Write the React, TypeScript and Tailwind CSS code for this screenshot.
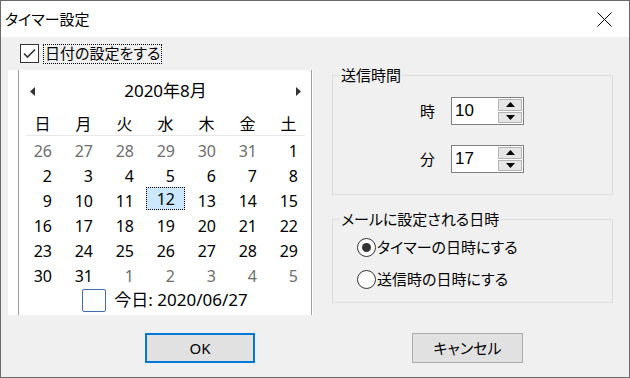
import React from 'react';

type Day = { d: number; muted?: boolean };

const weeks: Day[][] = [
  [{ d: 26, muted: true }, { d: 27, muted: true }, { d: 28, muted: true }, { d: 29, muted: true }, { d: 30, muted: true }, { d: 31, muted: true }, { d: 1 }],
  [{ d: 2 }, { d: 3 }, { d: 4 }, { d: 5 }, { d: 6 }, { d: 7 }, { d: 8 }],
  [{ d: 9 }, { d: 10 }, { d: 11 }, { d: 12 }, { d: 13 }, { d: 14 }, { d: 15 }],
  [{ d: 16 }, { d: 17 }, { d: 18 }, { d: 19 }, { d: 20 }, { d: 21 }, { d: 22 }],
  [{ d: 23 }, { d: 24 }, { d: 25 }, { d: 26 }, { d: 27 }, { d: 28 }, { d: 29 }],
  [{ d: 30 }, { d: 31 }, { d: 1, muted: true }, { d: 2, muted: true }, { d: 3, muted: true }, { d: 4, muted: true }, { d: 5, muted: true }],
];

const dayNames = ['日', '月', '火', '水', '木', '金', '土'];

function SpinBox({ label, value }: { label: string; value: string }) {
  return (
    <div className="flex items-center pl-[87px]">
      <span className="w-[31px] text-[15px] text-black">{label}</span>
      <div className="flex h-[28px] border border-[#7f7f7f]">
        <div className="w-[45px] bg-white pl-[3px] font-['Liberation_Sans',sans-serif] text-[17px] leading-[26px] text-black">
          {value}
        </div>
        <div className="flex w-[26px] flex-col gap-[1px] bg-white p-[1px]">
          <div className="flex flex-1 items-center justify-center border border-[#b4b4b4] bg-[#e6e6e6]">
            <svg width="9" height="5" viewBox="0 0 9 5">
              <path d="M0 5 L4.5 0 L9 5 Z" fill="#000" />
            </svg>
          </div>
          <div className="flex flex-1 items-center justify-center border border-[#b4b4b4] bg-[#e6e6e6]">
            <svg width="9" height="5" viewBox="0 0 9 5">
              <path d="M0 0 L4.5 5 L9 0 Z" fill="#000" />
            </svg>
          </div>
        </div>
      </div>
    </div>
  );
}

function Radio({ checked, label }: { checked?: boolean; label: string }) {
  return (
    <div className="flex h-[32px] items-center pl-[24px]">
      <span className="flex h-[19px] w-[19px] items-center justify-center rounded-full border border-[#333333] bg-white">
        {checked && <span className="h-[9px] w-[9px] rounded-full bg-[#333333]" />}
      </span>
      <span className="ml-[1px] text-[15px] text-black">{label}</span>
    </div>
  );
}

export default function App() {
  return (
    <div className="flex h-[378px] w-[630px] flex-col border border-[#6b6b6b] bg-[#f0f0f0] font-['Noto_Sans','Noto_Sans_CJK_JP',sans-serif] [font-feature-settings:'palt']">
      {/* Title bar */}
      <div className="flex h-[36px] shrink-0 items-center justify-between bg-white pl-[4px] pr-[17px]">
        <span className="text-[15px] text-black">タイマー設定</span>
        <svg width="15" height="15" viewBox="0 0 15 15">
          <path d="M0.5 0.5 L14.5 14.5 M14.5 0.5 L0.5 14.5" stroke="#000" strokeWidth="1" />
        </svg>
      </div>

      <div className="flex">
        {/* Left: checkbox + calendar */}
        <div className="ml-[7px] w-[305px]">
          <div className="flex h-[33px] items-center pl-[12px]">
            <span className="flex h-[19px] w-[19px] items-center justify-center border border-[#333333] bg-white">
              <svg width="13" height="11" viewBox="0 0 13 11">
                <path d="M1 5.5 L4.5 9 L12 1.5" fill="none" stroke="#333" strokeWidth="1.6" />
              </svg>
            </span>
            <span className="ml-[4px] flex h-[20px] items-center border border-dotted border-black px-[1px] text-[15px] text-black">
              日付の設定をする
            </span>
          </div>

          <div className="h-[245px] bg-white pl-[10px] pr-[1px]">
            <div className="h-full border-x border-[#a0a0a0]">
              <div className="flex h-[42px] items-center justify-between pl-[11px] pr-[10px]">
                <svg width="5" height="9" viewBox="0 0 5 9">
                  <path d="M5 0 L0 4.5 L5 9 Z" fill="#333" />
                </svg>
                <span className="text-[17px] text-black">2020年8月</span>
                <svg width="5" height="9" viewBox="0 0 5 9">
                  <path d="M0 0 L5 4.5 L0 9 Z" fill="#333" />
                </svg>
              </div>

              <div className="ml-[3px] grid h-[23px] w-[287px] grid-cols-7 items-center text-center text-[16px] text-black">
                {dayNames.map((n) => (
                  <span key={n}>{n}</span>
                ))}
              </div>
              <div className="ml-[7px] h-[1px] w-[279px] bg-[#e8e8e8]" />

              <div className="ml-[3px] mt-[2px] w-[287px]">
                {weeks.map((week, wi) => (
                  <div key={wi} className="grid h-[25px] grid-cols-7 text-[16px]">
                    {week.map((day, di) => {
                      const selected = wi === 2 && day.d === 12;
                      return selected ? (
                        <span
                          key={di}
                          className="mx-[1px] -mt-[1px] flex h-[23px] items-center justify-end border border-dotted border-black bg-[#cce8ff] pr-[9px] text-black"
                        >
                          {day.d}
                        </span>
                      ) : (
                        <span
                          key={di}
                          className={`flex items-center justify-end pr-[11px] ${day.muted ? 'text-[#6d6d6d]' : 'text-black'}`}
                        >
                          {day.d}
                        </span>
                      );
                    })}
                  </div>
                ))}
              </div>

              <div className="flex h-[24px] items-center justify-center gap-[8px]">
                <span className="h-[23px] w-[24px] rounded-[2px] border border-[#3c6eb4]" />
                <span className="text-[17px] text-black">今日: 2020/06/27</span>
              </div>
            </div>
          </div>
        </div>

        {/* Right: group boxes */}
        <div className="ml-[19px] w-[281px] pt-[28px]">
          <fieldset className="border border-[#dcdcdc] pb-[21px]">
            <legend className="ml-[7px] px-[1px] text-[15px] leading-[20px] text-black">送信時間</legend>
            <div className="mt-[12px] flex flex-col gap-[20px]">
              <SpinBox label="時" value="10" />
              <SpinBox label="分" value="17" />
            </div>
          </fieldset>

          <fieldset className="mt-[14px] border border-[#dcdcdc] pb-[7px] pt-[2px]">
            <legend className="ml-[7px] px-[1px] text-[15px] leading-[20px] text-black">メールに設定される日時</legend>
            <Radio checked label="タイマーの日時にする" />
            <Radio label="送信時の日時にする" />
          </fieldset>
        </div>
      </div>

      {/* Buttons */}
      <div className="mt-[18px] flex pl-[144px]">
        <button className="h-[30px] w-[110px] border-2 border-[#0078d7] bg-[#e1e1e1] text-[15px] text-black">OK</button>
        <button className="ml-[157px] h-[30px] w-[111px] border border-[#adadad] bg-[#e1e1e1] text-[15px] text-black">
          キャンセル
        </button>
      </div>
    </div>
  );
}
